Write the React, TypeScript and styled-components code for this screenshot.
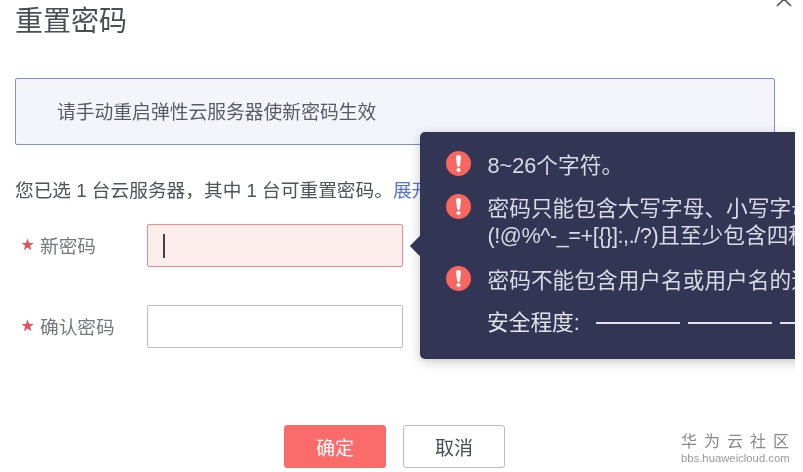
import React from "react";
import styled, { createGlobalStyle } from "styled-components";

const GlobalStyle = createGlobalStyle`
  html, body {
    margin: 0;
    padding: 0;
    background: #fff;
  }
  body {
    font-family: "Liberation Sans", "Noto Sans CJK SC", sans-serif;
  }
`;

const AlertIcon = () => (
  <svg width="25" height="25" viewBox="0 0 25 25">
    <circle cx="12.5" cy="12.5" r="12.5" fill="#f8665f" />
    <path d="M10 5.800a2.500 1.800 0 0 1 5 0l-1 9a1.500 1.200 0 0 1-3 0z" fill="#fff" />
    <circle cx="12.500" cy="19" r="2.100" fill="#fff" />
  </svg>
);

const StarIcon = () => (
  <svg width="13" height="13" viewBox="0 0 24 24">
    <path
      d="M12 1l3 8h8.500l-6.800 5.200 2.500 8.300L12 17.500l-6.800 5 2.500-8.300L1 9h8z"
      fill="#e8505b"
    />
  </svg>
);

const App: React.FC = () => {
  return (
    <Page>
      <GlobalStyle />
      <CloseMark>
        <svg width="16" height="16" viewBox="0 0 16 16">
          <path d="M1 1l14 14M15 1L1 15" stroke="#555" strokeWidth="1.600" fill="none" />
        </svg>
      </CloseMark>
      <Title>重置密码</Title>
      <Notice>请手动重启弹性云服务器使新密码生效</Notice>
      <Summary>
        您已选 1 台云服务器，其中 1 台可重置密码。<SummaryLink>展开</SummaryLink>
      </Summary>
      <Form>
        <Row>
          <Label>
            <StarIcon />
            <span>新密码</span>
          </Label>
          <FieldWrap>
            <Field $error>
              <Caret />
            </Field>
            <Tip>
              <TipRow>
                <AlertIcon />
                <TipText>8~26个字符。</TipText>
              </TipRow>
              <TipRow>
                <AlertIcon />
                <WrappedTipText>
                  密码只能包含大写字母、小写字母、数字和特殊字符
                  <br />
                  <Symbols>(!@%^-_=+[{"{"}{"}"}]:,./?)</Symbols>且至少包含四种字符中的三种。
                </WrappedTipText>
              </TipRow>
              <TipRow>
                <AlertIcon />
                <TipText>密码不能包含用户名或用户名的逆序。</TipText>
              </TipRow>
              <Strength>
                <span>安全程度:</span>
                <StrengthBars>
                  <StrengthBar />
                  <StrengthBar />
                  <StrengthBar />
                </StrengthBars>
              </Strength>
            </Tip>
          </FieldWrap>
        </Row>
        <Row>
          <Label>
            <StarIcon />
            <span>确认密码</span>
          </Label>
          <Field />
        </Row>
      </Form>
      <Footer>
        <Button $primary>确定</Button>
        <Button>取消</Button>
      </Footer>
      <Watermark>
        <WatermarkName>华为云社区</WatermarkName>
        <WatermarkUrl>bbs.huaweicloud.com</WatermarkUrl>
      </Watermark>
    </Page>
  );
};

export default App;

const Page = styled.div`
  position: relative;
  width: 795px;
  height: 472px;
  overflow: hidden;
  padding: 0 20px 0 15px;
  box-sizing: border-box;
  background: #fff;
  filter: blur(0.4px);
`;

const CloseMark = styled.div`
  position: absolute;
  top: -9px;
  left: 776px;
`;

const Title = styled.div`
  padding-top: 4px;
  height: 78px;
  box-sizing: border-box;
  font-size: 28px;
  line-height: 36px;
  color: #4a4d55;
`;

const Notice = styled.div`
  height: 67px;
  box-sizing: border-box;
  padding: 0 41px 3px;
  display: flex;
  align-items: center;
  background: #f3f5fa;
  border: 1px solid #7d90d8;
  border-radius: 2px;
  font-size: 18.800px;
  color: #595c63;
`;

const Summary = styled.div`
  margin-top: 34px;
  font-size: 18.700px;
  line-height: 24px;
  color: #4f5257;
  white-space: nowrap;
`;

const SummaryLink = styled.span`
  color: #5a74d0;
`;

const Form = styled.div`
  margin-top: 21px;
  display: flex;
  flex-direction: column;
  gap: 38px;
`;

const Row = styled.div`
  display: flex;
  align-items: center;
`;

const Label = styled.div`
  width: 132px;
  padding: 0 0 2px 6px;
  box-sizing: border-box;
  display: flex;
  align-items: center;
  gap: 6px;
  font-size: 18.700px;
  color: #77797e;
`;

const FieldWrap = styled.div`
  position: relative;
`;

const Field = styled.div<{ $error?: boolean }>`
  width: 256px;
  height: 43px;
  box-sizing: border-box;
  padding-left: 15px;
  display: flex;
  align-items: center;
  background: ${(p) => (p.$error ? "#fdeded" : "#fff")};
  border: 1px solid ${(p) => (p.$error ? "#f58a88" : "#bdbdbd")};
  border-radius: 2px;
`;

const Caret = styled.div`
  width: 1.500px;
  height: 24px;
  background: #444;
`;

const Tip = styled.div`
  position: absolute;
  top: -92px;
  left: 273px;
  width: 470px;
  height: 227px;
  box-sizing: border-box;
  padding: 19px 0 0 26px;
  background: #323654;
  border-radius: 5px;
  box-shadow: 0 3px 12px rgba(0, 0, 0, 0.22);
  color: #d8dbe6;
  font-size: 21.700px;
  &::before {
    content: "";
    position: absolute;
    left: -9px;
    top: 105px;
    width: 18px;
    height: 18px;
    background: #323654;
    transform: rotate(45deg) scale(0.8);
  }
`;

const TipRow = styled.div`
  display: flex;
  gap: 16.500px;
  margin-bottom: 16px;
  svg {
    flex: none;
  }
`;

const TipText = styled.div`
  line-height: 27px;
  white-space: nowrap;
  padding-top: 1px;
  margin-bottom: -1px;
`;

const WrappedTipText = styled(TipText)`
  padding-bottom: 2px;
`;

const Symbols = styled.span`
  letter-spacing: -0.450px;
`;

const Strength = styled.div`
  margin: 0 0 0 41px;
  display: flex;
  align-items: center;
  gap: 16px;
  color: #e2e4ec;
  line-height: 27px;
`;

const StrengthBars = styled.div`
  display: flex;
  gap: 8px;
`;

const StrengthBar = styled.div`
  width: 84px;
  height: 2px;
  background: #e2e4ec;
`;

const Footer = styled.div`
  margin-top: 77px;
  padding-left: 269px;
  display: flex;
  gap: 17px;
`;

const Button = styled.div<{ $primary?: boolean }>`
  width: 102px;
  height: 43px;
  box-sizing: border-box;
  display: flex;
  align-items: center;
  justify-content: center;
  font-size: 19px;
  border-radius: 3px;
  background: ${(p) => (p.$primary ? "#fb6b69" : "#fff")};
  border: 1px solid ${(p) => (p.$primary ? "#fb6b69" : "#bdbdbd")};
  color: ${(p) => (p.$primary ? "#fff" : "#4a4d55")};
`;

const Watermark = styled.div`
  position: absolute;
  left: 681px;
  top: 432px;
  width: 110px;
  color: #8a8a8a;
`;

const WatermarkName = styled.div`
  font-size: 16px;
  line-height: 20px;
  letter-spacing: 7px;
  white-space: nowrap;
`;

const WatermarkUrl = styled.div`
  font-size: 11.300px;
  line-height: 13px;
  white-space: nowrap;
  color: #999;
`;
